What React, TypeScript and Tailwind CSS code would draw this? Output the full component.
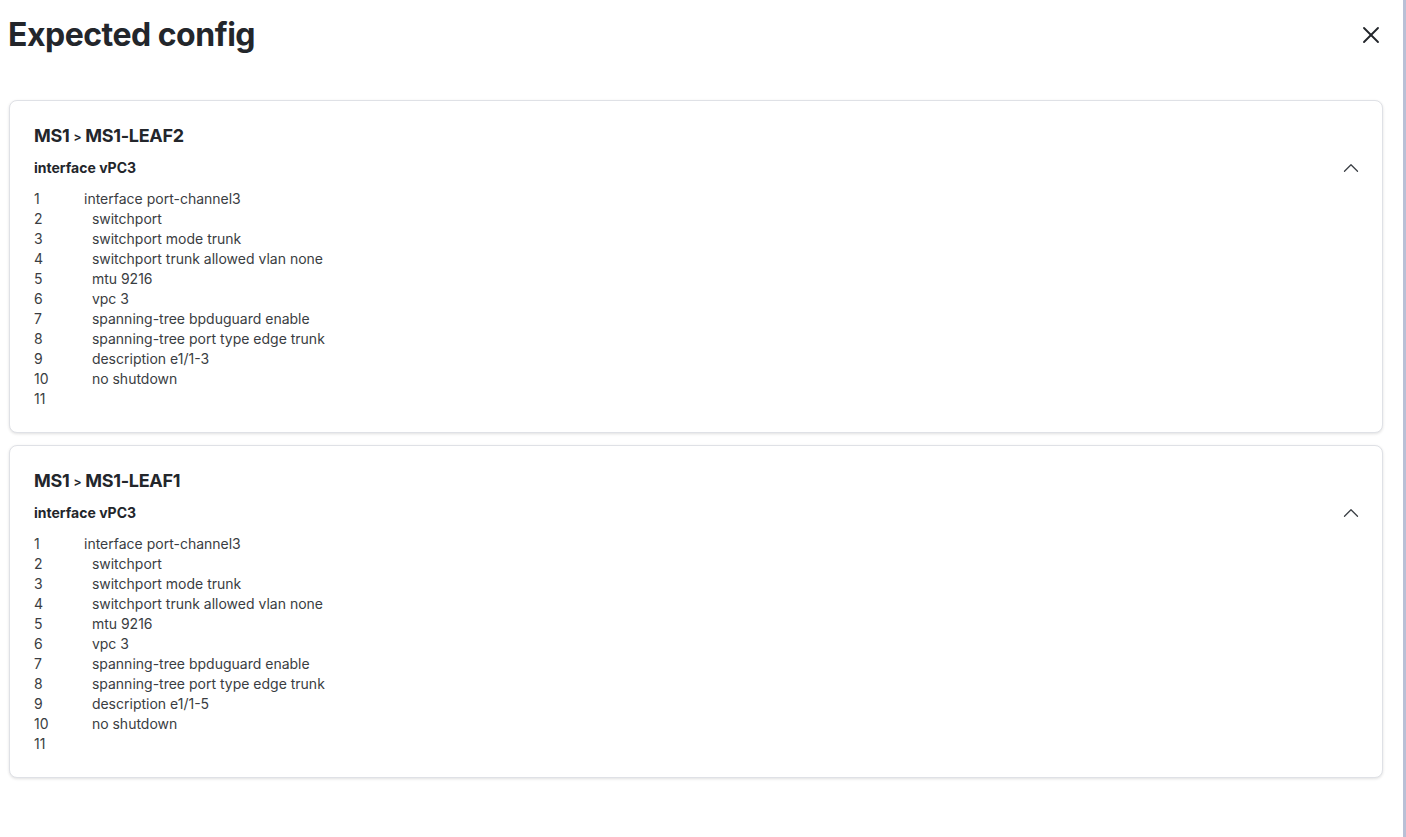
import { X, ChevronUp } from "lucide-react";

const font = { fontFamily: "Inter, 'Noto Sans', sans-serif" };

const makeLines = (desc: string) => [
  "interface port-channel3",
  "  switchport",
  "  switchport mode trunk",
  "  switchport trunk allowed vlan none",
  "  mtu 9216",
  "  vpc 3",
  "  spanning-tree bpduguard enable",
  "  spanning-tree port type edge trunk",
  `  description ${desc}`,
  "  no shutdown",
  "",
];

const configs = [
  { device: "MS1-LEAF2", iface: "interface vPC3", lines: makeLines("e1/1-3") },
  { device: "MS1-LEAF1", iface: "interface vPC3", lines: makeLines("e1/1-5") },
];

const ConfigCard = ({
  device,
  iface,
  lines,
}: {
  device: string;
  iface: string;
  lines: string[];
}) => (
  <div className="rounded-lg border border-[#dfe1e6] bg-white px-6 pt-[23px] pb-[23px] shadow-[0_1px_3px_rgba(0,0,0,0.12)]">
    <h2 className="text-[18px] leading-6 font-bold text-[#23262b] tracking-[-0.3px]">
      MS1 <span className="text-[12px] align-[1px]">&gt;</span> {device}
    </h2>
    <div className="mt-[9px] flex items-center justify-between h-5">
      <h3 className="text-[14px] leading-5 font-bold text-[#23262b]">{iface}</h3>
      <ChevronUp className="w-[26px] h-[26px] -mr-[6px] text-[#3b3f45]" strokeWidth={1.2} />
    </div>
    <div className="mt-[11px] text-[14px] leading-5 text-[#3a3d42]">
      {lines.map((line, i) => (
        <div key={i} className="flex h-5">
          <span className="w-[50px] shrink-0">{i + 1}</span>
          <span className="whitespace-pre">{line}</span>
        </div>
      ))}
    </div>
  </div>
);

export default function App() {
  return (
    <div className="flex w-[1406px] h-[837px] bg-white overflow-hidden" style={font}>
      <div className="flex-1 pl-2 pr-[20px]">
        <div className="flex items-center justify-between h-[70px] pb-[1px]">
          <h1 className="text-[32px] font-bold text-[#23262b] tracking-[-0.5px]">
            Expected config
          </h1>
          <X className="w-7 h-7 -mr-[2px] text-[#23262b]" strokeWidth={1.6} />
        </div>
        <div className="mt-[30px] ml-[1px] flex flex-col gap-[12px]">
          {configs.map((c) => (
            <ConfigCard key={c.device} {...c} />
          ))}
        </div>
      </div>
      <div className="w-[3px] bg-[#b9c0d6]" />
    </div>
  );
}
